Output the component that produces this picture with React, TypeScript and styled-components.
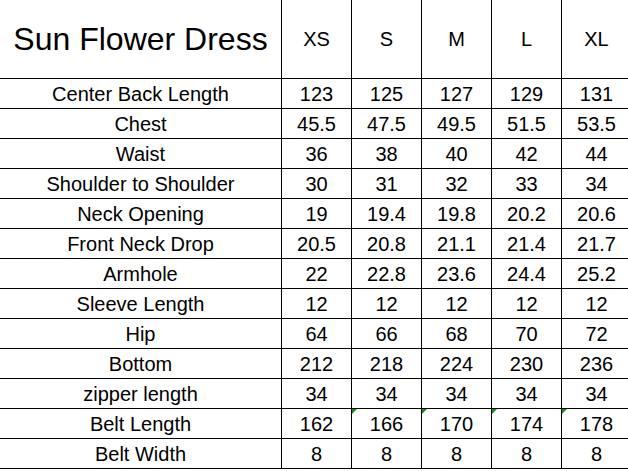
import React from 'react';
import styled, { createGlobalStyle } from 'styled-components';

const sizes = ['XS', 'S', 'M', 'L', 'XL'];

// rows of the size chart, flagged = cell shows the little green "number as text" marker
const rows: { label: string; values: string[]; flagged?: boolean }[] = [
  { label: 'Center Back Length', values: ['123', '125', '127', '129', '131'] },
  { label: 'Chest', values: ['45.5', '47.5', '49.5', '51.5', '53.5'] },
  { label: 'Waist', values: ['36', '38', '40', '42', '44'] },
  { label: 'Shoulder to Shoulder', values: ['30', '31', '32', '33', '34'] },
  { label: 'Neck Opening', values: ['19', '19.4', '19.8', '20.2', '20.6'] },
  { label: 'Front Neck Drop', values: ['20.5', '20.8', '21.1', '21.4', '21.7'] },
  { label: 'Armhole', values: ['22', '22.8', '23.6', '24.4', '25.2'] },
  { label: 'Sleeve Length', values: ['12', '12', '12', '12', '12'] },
  { label: 'Hip', values: ['64', '66', '68', '70', '72'] },
  { label: 'Bottom', values: ['212', '218', '224', '230', '236'] },
  { label: 'zipper length', values: ['34', '34', '34', '34', '34'] },
  { label: 'Belt Length', values: ['162', '166', '170', '174', '178'], flagged: true },
  { label: 'Belt Width', values: ['8', '8', '8', '8', '8'] },
];

export default function App() {
  return (
    <>
      <GlobalStyle />
      <S.Sheet>
        <S.Cell $title $header>Sun Flower Dress</S.Cell>
        {sizes.map((size) => (
          <S.Cell $header key={size}>
            {size}
          </S.Cell>
        ))}
        {rows.map((row) => (
          <React.Fragment key={row.label}>
            <S.Cell>{row.label}</S.Cell>
            {row.values.map((value, i) => (
              <S.Cell key={row.label + i}>
                {row.flagged && i > 0 && <S.Marker />}
                {value}
              </S.Cell>
            ))}
          </React.Fragment>
        ))}
      </S.Sheet>
    </>
  );
}

const GlobalStyle = createGlobalStyle`
  html, body {
    margin: 0;
    padding: 0;
    background: #fff;
    overflow: hidden;
  }
  body {
    font-family: "Liberation Sans", Arial, sans-serif;
    color: #000;
  }
`;

const S = {
  Sheet: styled.div`
    display: grid;
    grid-template-columns: 282px repeat(5, 70px);
    grid-template-rows: 79px;
    grid-auto-rows: 30px;
    width: 632px;
  `,
  Cell: styled.div<{ $title?: boolean; $header?: boolean }>`
    position: relative;
    box-sizing: border-box;
    display: flex;
    align-items: center;
    justify-content: center;
    padding-top: ${(p) => (p.$header ? '1px' : '2px')};
    border-right: 1px solid #000;
    border-bottom: 1px solid #000;
    font-size: ${(p) => (p.$title ? '32px' : '20px')};
    white-space: nowrap;
  `,
  Marker: styled.span`
    position: absolute;
    top: 0;
    left: 0;
    width: 0;
    height: 0;
    border-top: 5px solid #1c8a1c;
    border-right: 5px solid transparent;
  `,
};
